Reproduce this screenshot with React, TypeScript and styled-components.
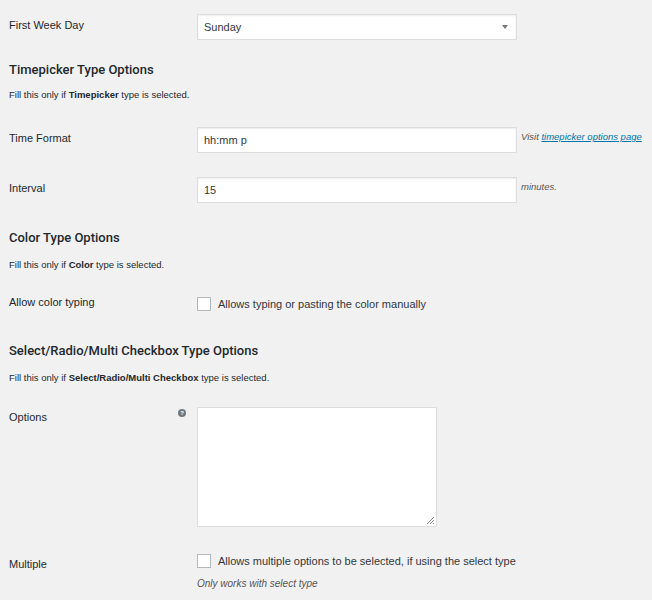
import React from "react";
import styled, { createGlobalStyle } from "styled-components";

const G = createGlobalStyle`
  body { margin: 0; background: #f1f1f1; font-family: "Liberation Sans", Arial, sans-serif; color: #23282d; }
`;
const Page = styled.div`padding: 0 0 0 9px; width: 643px; overflow: hidden;`;
const Row = styled.div<{ h: number; pt: number }>`
  display: flex; height: ${p => p.h}px; padding-top: ${p => p.pt}px; box-sizing: border-box;
`;
const Label = styled.div<{ top?: number }>`
  width: 188px; flex: none; font-size: 11px; padding-top: ${p => p.top ?? 0}px; position: relative;
`;
const Field = styled.div`display: flex; flex-direction: column; gap: 10px;`;
const Inline = styled.div`display: flex; align-items: flex-start; gap: 4px;`;
const Input = styled.div`
  height: 24px; background: #fff; border: 1px solid #ddd; box-shadow: inset 0 1px 2px rgba(0,0,0,.07);
  font-size: 11px; display: flex; align-items: center; padding: 0 6px; box-sizing: content-box; color: #32373c;
  width: 306px; justify-content: space-between;
`;
const Arrow = styled.span`width:0;height:0;border-left:3px solid transparent;border-right:3px solid transparent;border-top:4px solid #777;margin-right:2px;`;
const Note = styled.div`font-size: 9.5px; font-style: italic; color: #555; padding-top: 4px; white-space: nowrap;`;
const A = styled.span`color: #0073aa; text-decoration: underline;`;
const H = styled.div<{ h: number }>`font-family: Roboto, "Liberation Sans", sans-serif; font-size: 13px; font-weight: 500; height: ${p => p.h}px; display:flex; align-items:flex-end;`;
const Desc = styled.div<{ h: number }>`font-size: 9.5px; height: ${p => p.h}px; display:flex; align-items:flex-end; b{font-weight:600;}`;
const Check = styled.label`display: flex; align-items: center; gap: 7px; font-size: 11px; color: #32373c;`;
const Box = styled.span`width: 12px; height: 12px; border: 1px solid #b4b9be; background: #fff; flex: none;`;
const Help = styled.span`position: absolute; left: 169px; top: 2px; width: 8px; height: 8px; border-radius: 50%; background: #72777c; color: #fff; font-size: 6px; font-weight: bold; display:flex; align-items:center; justify-content:center;`;
const Area = styled.div`width: 238px; height: 118px; background: #fff; border: 1px solid #ddd; position: relative;`;
const Grip = styled.svg`position:absolute; right:1px; bottom:1px;`;
const Italic = styled.div`font-size: 10px; font-style: italic; color: #555;`;

export default function App() {
  return (
    <Page>
      <G />
      <Row h={44} pt={14}>
        <Label top={5}>First Week Day</Label>
        <Input>Sunday<Arrow /></Input>
      </Row>
      <H h={33}>Timepicker Type Options</H>
      <Desc h={23}>Fill this only if&nbsp;<b>Timepicker</b>&nbsp;type is selected.</Desc>
      <Row h={77} pt={27}>
        <Label top={5}>Time Format</Label>
        <Inline><Input>hh:mm p</Input><Note>Visit <A>timepicker options page</A></Note></Inline>
      </Row>
      <Row h={26} pt={0}>
        <Label top={5}>Interval</Label>
        <Inline><Input>15</Input><Note>minutes.</Note></Inline>
      </Row>
      <H h={42}>Color Type Options</H>
      <Desc h={25}>Fill this only if&nbsp;<b>Color</b>&nbsp;type is selected.</Desc>
      <Row h={46} pt={22}>
        <Label top={4}>Allow color typing</Label>
        <Check><Box />Allows typing or pasting the color manually</Check>
      </Row>
      <H h={42}>Select/Radio/Multi Checkbox Type Options</H>
      <Desc h={25}>Fill this only if&nbsp;<b>Select/Radio/Multi Checkbox</b>&nbsp;type is selected.</Desc>
      <Row h={147} pt={24}>
        <Label top={4}>Options<Help>?</Help></Label>
        <Area><Grip width="9" height="9" viewBox="0 0 9 9"><path d="M8 1L1 8M8 4L4 8M8 7L7 8" stroke="#888" strokeWidth="1"/></Grip></Area>
      </Row>
      <Row h={60} pt={24}>
        <Label top={4}>Multiple</Label>
        <Field>
          <Check><Box />Allows multiple options to be selected, if using the select type</Check>
          <Italic>Only works with select type</Italic>
        </Field>
      </Row>
    </Page>
  );
}
